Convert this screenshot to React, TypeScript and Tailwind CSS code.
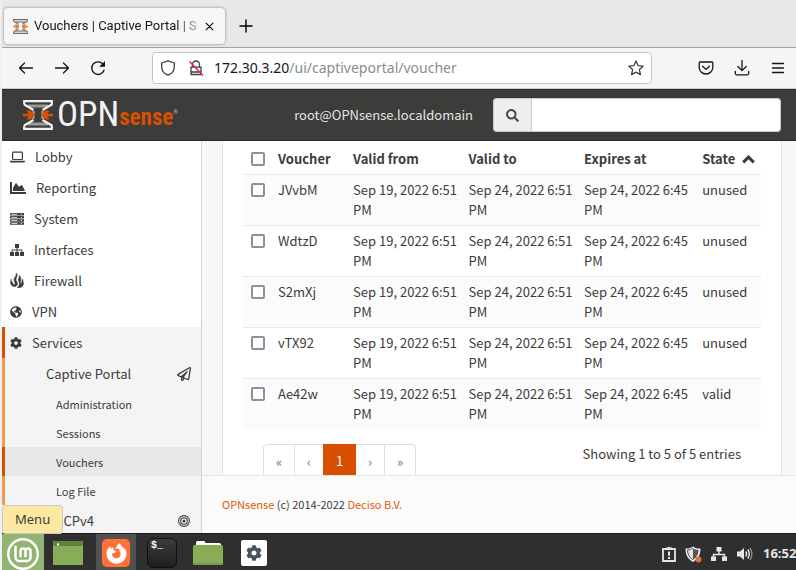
import type { ReactNode } from "react";
import {
  FaChartArea,
  FaCog,
  FaFirefoxBrowser,
  FaGlobeAmericas,
  FaRegPaperPlane,
  FaSearch,
} from "react-icons/fa";
import { SiLinuxmint } from "react-icons/si";

const UI = "font-['Noto_Sans',sans-serif]";
const PAGE = "font-['Noto_Sans_CJK_SC',sans-serif]";

/* ---------- icons ---------- */

function Line({ d, size = 16, width = 1.3, className = "" }: { d: string; size?: number; width?: number; className?: string }) {
  return (
    <svg width={size} height={size} viewBox="0 0 16 16" fill="none" stroke="currentColor" strokeWidth={width} strokeLinecap="round" strokeLinejoin="round" className={className} aria-hidden="true">
      <path d={d} />
    </svg>
  );
}

function LogoMark({ size, dark = false }: { size: number; dark?: boolean }) {
  const main = dark ? "#6d6d6d" : "#f2f2f2";
  const side = dark ? "#8c8c8c" : "#9a9a9a";
  const arrow = dark ? "#f07a1a" : "#d94f00";
  return (
    <svg width={size} height={size} viewBox="0 0 30 30" fill="none" aria-hidden="true">
      <path d="M5 6h20M5 24h20" stroke={side} strokeWidth="3" />
      <path d="M10.500 11v8M19.500 11v8" stroke={side} strokeWidth="2.400" />
      <path d="M1.200 4.500V1.200h27.600v3.300L19.500 10M1.200 4.500l9.300 5.500M1.200 25.500v3.300h27.600v-3.300L19.500 20M1.200 25.500l9.300-5.500" stroke={main} strokeWidth="2.200" />
      <path d="M0 13.700h5.500L3.800 10.400h3.600L12 15l-4.600 4.600H3.800l1.700-3.300H0zM30 13.700h-5.500l1.700-3.300h-3.600L18 15l4.600 4.600h3.600l-1.700-3.300H30z" fill={arrow} />
    </svg>
  );
}

const Laptop = () => (
  <svg width="15" height="12" viewBox="0 0 15 12" aria-hidden="true">
    <rect x="2.600" y="1.100" width="9.800" height="7.400" rx="0.800" fill="none" stroke="currentColor" strokeWidth="1.200" />
    <path d="M0 9.700h15v.8q0 1-1.200 1H1.200Q0 11.500 0 10.500z" fill="currentColor" />
  </svg>
);

const Server = () => (
  <svg width="14" height="12" viewBox="0 0 14 12" aria-hidden="true">
    {[0, 3.1, 6.2, 9.3].map((y) => (
      <g key={y}>
        <rect x="0" y={y} width="14" height="2.500" rx="0.400" fill="currentColor" />
        <path d={`M1.300 ${y + 1.25}h6M10.800 ${y + 1.25}h1.200`} stroke="#fff" strokeWidth="0.800" />
      </g>
    ))}
  </svg>
);

const Sitemap = () => (
  <svg width="14" height="12" viewBox="0 0 14 12" aria-hidden="true">
    <path d="M5 0h4v4H5zM0 8h4v4H0zM5 8h4v4H5zM10 8h4v4h-4z" fill="currentColor" />
    <path d="M7 3v6M2 9V6h10v3" fill="none" stroke="currentColor" />
  </svg>
);

const Flames = () => (
  <svg width="14" height="15" viewBox="0 0 14 15" fill="currentColor" stroke="currentColor" strokeWidth="0.500" aria-hidden="true">
    <path d="M6.300 0C7 3 3.800 4.300 4 7c.1 1.300.8 1.700 1 2.800.2 1.300-.4 2-1.100 1.900-.9-.2-1-1.300-1-2.200C1.800 9.500 1 8 1.200 6 .2 8.500.3 11.800 2.300 13c1.700 1 4.300.8 5-1.200.9-2.700-1.900-3.700-1.200-6C6.500 4.300 8.300 2 6.300 0z" />
    <path d="M9.300 2.500c.4 2.300-1.500 3-.8 5.200.5 1.600 1.300 2.800.5 4.700-.4 1-1.200 1.700-2 2.300 2.500.2 5-.2 6-2.200 1.200-2.600-.3-4-.2-6.300-.8.600-1.100 1.500-1 2.600.1 1-.2 1.600-.7 1.600-.8-.1-.9-1.200-.6-2.200.5-1.800 1-3.900-1.200-5.700z" />
  </svg>
);

const Target = () => (
  <svg width="12" height="12" viewBox="0 0 12 12" fill="none" stroke="currentColor" strokeWidth="1.100" aria-hidden="true">
    <circle cx="6" cy="6" r="5.400" />
    <circle cx="6" cy="6" r="3.300" />
    <circle cx="6" cy="6" r="1.500" fill="currentColor" stroke="none" />
  </svg>
);

/* ---------- browser chrome ---------- */

function TabStrip() {
  return (
    <div className="flex h-[47px] shrink-0 items-center bg-[#e8e8e8] pt-[5px] pl-[2px]">
      <div className="flex h-9 w-[221px] items-center rounded bg-[#f6f6f6] pr-2 pl-[9px] shadow-[0_0_3px_rgba(0,0,0,0.45)]">
        <LogoMark size={15} dark />
        <span className="ml-[6px] min-w-0 flex-1 overflow-hidden bg-linear-to-r from-[#15141a] from-85% to-[#15141a]/20 bg-clip-text font-[Roboto,sans-serif] text-[13px] whitespace-nowrap text-transparent">
          Vouchers | Captive Portal | S
        </span>
        <button aria-label="Close tab" className="flex w-4 justify-center">
          <Line d="M3 3l10 10M13 3L3 13" size={11} width={1.5} />
        </button>
      </div>
      <button aria-label="New tab" className="ml-[13px]">
        <Line d="M8 2v12M2 8h12" width={1.4} />
      </button>
    </div>
  );
}

function ToolButton({ label, children }: { label: string; children: ReactNode }) {
  return (
    <button aria-label={label} className="flex w-9 shrink-0 justify-center text-[#15141a]">
      {children}
    </button>
  );
}

function Toolbar() {
  return (
    <div className="flex h-[42px] shrink-0 items-center border-y border-t-[#a3a3a3] border-b-[#cccccc] bg-[#f5f5f5] pl-[6px]">
      <ToolButton label="Back"><Line d="M14.500 8H1.500M6.500 3L1.500 8l5 5" /></ToolButton>
      <ToolButton label="Forward"><Line d="M1.500 8h13M9.500 3l5 5-5 5" /></ToolButton>
      <ToolButton label="Reload">
        <svg width="16" height="16" viewBox="0 0 16 16" aria-hidden="true">
          <path d="M14 10.200A6.300 6.300 0 1 1 13.200 4.500" fill="none" stroke="currentColor" strokeWidth="1.400" strokeLinecap="round" />
          <path d="M15 1v5.800H9.200z" fill="currentColor" />
        </svg>
      </ToolButton>
      <div className="ml-9 flex h-8 min-w-0 flex-1 items-center rounded border border-[#c4c4c4] bg-white px-[7px] text-[#3f3f43]">
        <Line d="M8 .8l6.300 2.200v4c0 4-2.300 6.700-6.300 8.200C4 13.700 1.700 11 1.700 7V3z" />
        <svg width="16" height="16" viewBox="0 0 16 16" fill="none" stroke="currentColor" strokeWidth="1.300" className="ml-3" aria-hidden="true">
          <path d="M4.500 7V4.500a3.500 3.500 0 0 1 7 0V7M3 7.200h10v7.300H3zM3 12h10" />
          <path d="M1.500 1.500l13.500 14" stroke="#e22850" strokeWidth="1.500" />
        </svg>
        <span className="ml-[10px] flex-1 truncate text-sm text-[#8c8c8c]">
          <span className="text-[#15141a]">172.30.3.20</span>/ui/captiveportal/voucher
        </span>
        <button aria-label="Bookmark this page">
          <Line d="M8 1l2.100 4.600 5 .6-3.700 3.400 1 5L8 12.100l-4.400 2.500 1-5L.9 6.200l5-.6z" />
        </button>
      </div>
      <div className="w-9 shrink-0" />
      <ToolButton label="Save to Pocket"><Line d="M2.200 2h11.600q1 0 1 1v4.200a6.800 6.800 0 0 1-13.600 0V3q0-1 1-1zM4.600 6.200L8 9.400l3.400-3.200" /></ToolButton>
      <ToolButton label="Downloads"><Line d="M8 .5v10M3.800 6.500L8 10.600l4.200-4.100M1.300 11.500v1.800q0 1.500 1.500 1.500h10.400q1.500 0 1.500-1.500v-1.800" /></ToolButton>
      <ToolButton label="Open menu"><Line d="M2.500 3.500h11M2.500 8h11M2.500 12.500h11" width={1.4} /></ToolButton>
    </div>
  );
}

/* ---------- firewall web interface ---------- */

function Header() {
  return (
    <header className="flex h-[52px] shrink-0 items-center border-y border-[#2b282b] bg-[#3c3c3b] pr-[15px] pl-[21px]">
      <a href="#home" className="flex items-center font-['Roboto_Condensed','Liberation_Sans',sans-serif]">
        <LogoMark size={30} />
        <span className="ml-1 text-[35px] leading-[34px] text-[#f2f2f2]">OPN</span>
        <span className="mt-[6px] text-[23px] leading-[26px] font-bold text-[#d94f00]">sense</span>
        <span className="-mt-2 text-[6px] text-[#bbbbbb]">®</span>
      </a>
      <span className="ml-auto text-[13px] text-[#e4e4e4]">root@OPNsense.localdomain</span>
      <form className="ml-5 flex h-[34px] w-[288px] overflow-hidden rounded-[3px] border border-[#cccccc]">
        <label htmlFor="search" className="flex w-[38px] shrink-0 items-center justify-center border-r border-[#cccccc] bg-[#eeeeee] text-[#4a4a4a]">
          <FaSearch size={13} aria-label="Search" />
        </label>
        <input id="search" type="text" className="min-w-0 flex-1 bg-white px-3 text-sm outline-none" />
      </form>
    </header>
  );
}

const sections = [
  { name: "Lobby", icon: <Laptop /> },
  { name: "Reporting", icon: <FaChartArea size={16} /> },
  { name: "System", icon: <Server /> },
  { name: "Interfaces", icon: <Sitemap /> },
  { name: "Firewall", icon: <Flames /> },
  { name: "VPN", icon: <FaGlobeAmericas size={12} /> },
];

const pages = ["Administration", "Sessions", "Vouchers", "Log File"];

function Sidebar() {
  return (
    <nav className="w-[200px] shrink-0 overflow-hidden border-r border-[#d5d5d5] bg-white text-[13px] leading-5 text-[#3c3c3b]">
      {sections.map((s) => (
        <a key={s.name} href={`#${s.name}`} className="flex h-[31px] items-center gap-[10px] pl-2">
          {s.icon}
          {s.name}
        </a>
      ))}
      <div className="bg-[#f4f4f4]">
        <a href="#Services" className="flex h-[31px] items-center gap-[10px] border-l-3 border-[#d94f00] pl-[5px]">
          <FaCog size={12} />
          Services
        </a>
        <a href="#CaptivePortal" className="flex h-[31px] items-center justify-between border-l-3 border-[#f09a55] pr-[10px] pl-[41px]">
          Captive Portal
          <FaRegPaperPlane size={14} />
        </a>
        {pages.map((p) => (
          <a
            key={p}
            href={`#${p}`}
            className={`flex h-[29px] items-center border-l-3 pl-[51px] text-[11px] ${p === "Vouchers" ? "border-[#d94f00] bg-[#e7e7e7]" : "border-[#f09a55]"}`}
          >
            {p}
          </a>
        ))}
        <a href="#DHCPv4" className="flex h-[31px] items-center justify-between border-l-3 border-transparent pr-[11px] pl-10">
          DHCPv4
          <Target />
        </a>
      </div>
    </nav>
  );
}

const vouchers = [
  { code: "JVvbM", state: "unused" },
  { code: "WdtzD", state: "unused" },
  { code: "S2mXj", state: "unused" },
  { code: "vTX92", state: "unused" },
  { code: "Ae42w", state: "valid" },
];

const CHECK = "block size-[14px] appearance-none rounded-[2px] border-2 border-[#8f8f9d] bg-white";

function VoucherTable() {
  return (
    <table className="w-full table-fixed text-left">
      <colgroup>
        <col className="w-[27px]" />
        <col className="w-[14.5%]" />
        <col className="w-[22.3%]" />
        <col className="w-[22.3%]" />
        <col className="w-[22.8%]" />
        <col />
      </colgroup>
      <thead>
        <tr className="h-[33px] [&>th]:pt-1 [&>th]:pl-2 [&>th]:font-bold">
          <th><input type="checkbox" aria-label="Select all" className={CHECK} /></th>
          <th>Voucher</th>
          <th>Valid from</th>
          <th>Valid to</th>
          <th>Expires at</th>
          <th className="whitespace-nowrap">
            State
            <svg width="13" height="9" viewBox="0 0 13 9" className="ml-[7px] inline-block align-baseline" aria-hidden="true">
              <path d="M1.200 7.300L6.500 2.200l5.300 5.100" fill="none" stroke="currentColor" strokeWidth="3.200" />
            </svg>
          </th>
        </tr>
      </thead>
      <tbody>
        {vouchers.map((v) => (
          <tr key={v.code} className="border-t border-[#e9e9e9] align-top odd:bg-[#fbfbfb] [&>td]:py-[5px] [&>td]:pl-2">
            <td><input type="checkbox" aria-label={`Select ${v.code}`} className={`${CHECK} mt-[3px]`} /></td>
            <td>{v.code}</td>
            <td>Sep 19, 2022 6:51 PM</td>
            <td>Sep 24, 2022 6:51 PM</td>
            <td>Sep 24, 2022 6:45 PM</td>
            <td>{v.state}</td>
          </tr>
        ))}
      </tbody>
    </table>
  );
}

function Pagination() {
  return (
    <div className="flex h-9 rounded border border-[#dddddd] text-[13px] text-[#777777] [&>button]:h-[34px]">
      <button aria-label="First page" className="w-[30px]">«</button>
      <button aria-label="Previous page" className="w-[29px] border-l border-[#dddddd]">‹</button>
      <button aria-current="page" className="-mt-px w-[33px] bg-[#d94f00] text-white">1</button>
      <button aria-label="Next page" className="w-7">›</button>
      <button aria-label="Last page" className="w-[31px] border-l border-[#dddddd]">»</button>
    </div>
  );
}

/* ---------- desktop panel ---------- */

const Window = () => (
  <svg width="30" height="24" viewBox="0 0 30 24" aria-hidden="true">
    <path d="M0 0h30v24H0z" fill="#87ad56" />
    <path d="M0 0h30v5H0z" fill="#628242" />
    <path d="M4 2.500h2v2H4z" fill="#fff" />
  </svg>
);

const Terminal = () => (
  <span className="flex size-[30px] rounded-md border border-[#111111] bg-linear-to-b from-[#3c3c3c] to-[#1f1f1f] pl-[3px] font-['Liberation_Mono',monospace] text-[10px] leading-[13px] font-bold text-white">
    $_
  </span>
);

const Folder = () => (
  <svg width="30" height="26" viewBox="0 0 30 26" aria-hidden="true">
    <path d="M3 8V2.500Q3 1 4.500 1H11q1 0 1.500 2h14q1.500 0 1.500 1.500V8z" fill="#fff" />
    <rect y="5" width="30" height="20" rx="1.500" fill="#87ad56" />
    <path d="M0 24h30" stroke="#6b8c45" />
  </svg>
);

function Task({ label, active = false, children }: { label: string; active?: boolean; children: ReactNode }) {
  return (
    <button aria-label={label} className={`flex w-10 items-center justify-center pt-[2px] ${active ? "bg-[#515151]" : ""}`}>
      {children}
    </button>
  );
}

function Taskbar() {
  return (
    <footer className="relative flex h-[37px] shrink-0 justify-between overflow-visible border-t border-[#1d1d1f] bg-[#2f2f2f]">
      <div role="tooltip" className="absolute bottom-9 left-0 rounded-[3px] border border-[#c8c8c8] bg-[#fce8a1] px-3 py-1 text-[13px] leading-[19px] text-[#3d3d3d]">
        Menu
      </div>
      <div className="-ml-[2px] flex gap-[6px] pl-[2px]">
        <button aria-label="Menu" className="mr-[-2px] flex w-[42px] items-center justify-center bg-[#92b372] pt-1 text-white">
          <SiLinuxmint size={32} />
        </button>
        <Task label="Show desktop"><Window /></Task>
        <div className="ml-[2px] flex">
          <Task label="Firefox" active>
            <span className="flex size-7 items-center justify-center rounded-[5px] bg-[#ff7139] text-white">
              <FaFirefoxBrowser size={21} />
            </span>
          </Task>
        </div>
        <Task label="Terminal"><Terminal /></Task>
        <Task label="Files"><Folder /></Task>
        <Task label="Settings">
          <span className="flex size-[26px] items-center justify-center rounded-[2px] bg-white text-[#47525e]">
            <FaCog size={16} />
          </span>
        </Task>
      </div>
      <div className="flex items-center pt-1 text-[#e6e6e6]">
        <svg width="14" height="16" viewBox="0 0 14 16" aria-hidden="true">
          <path d="M1 3h12v12H1z" fill="none" stroke="currentColor" strokeWidth="1.800" />
          <path d="M4 3.500V1.500h1.800a1.300 1.300 0 0 1 2.400 0H10v2zM6 5.500h2v4.200H6zM6 11h2v2H6z" fill="currentColor" />
        </svg>
        <svg width="17" height="17" viewBox="0 0 17 17" className="ml-[9px]" aria-hidden="true">
          <path d="M8 .5c2.500 1.700 4.500 2 7.500 2 0 6.500-2 10.500-7.500 13.500C2.500 13 .5 9 .5 2.500c3 0 5-.3 7.500-2z" fill="currentColor" />
          <path d="M8 2.500c1.800 1 3.200 1.400 5.500 1.500-.3 4.500-1.800 7.500-5.500 9.700z" fill="#555" />
          <path d="M8 2.500C6.200 3.500 4.800 3.900 2.500 4c.3 4.500 1.800 7.500 5.500 9.700" fill="none" stroke="#555" />
          <circle cx="13.500" cy="13.500" r="3" fill="#e2703a" />
        </svg>
        <svg width="16" height="14" viewBox="0 0 16 14" className="ml-[9px]" fill="currentColor" aria-hidden="true">
          <path d="M5.500 0h5v4.500h-5zM0 9.500h5V14H0zM11 9.500h5V14h-5zM7.300 4h1.400v2.800h5.500V10h-1.400V8.200H3.200V10H1.800V6.800h5.500z" />
        </svg>
        <svg width="16" height="14" viewBox="0 0 16 14" className="ml-[10px]" fill="none" stroke="currentColor" strokeWidth="1.400" aria-hidden="true">
          <path d="M0 4.500h3L7 1v12L3 9.500H0z" fill="currentColor" stroke="none" />
          <path d="M8.800 4.500q1.700 2.500 0 5M10.800 2.500q3 4.500 0 9" />
          <path d="M13 .8q3.800 6.200 0 12.400" stroke="#8a8a8a" />
        </svg>
        <time className="ml-[10px] w-[33px] overflow-hidden text-[13px] font-bold whitespace-nowrap">16:52</time>
      </div>
    </footer>
  );
}

export default function App() {
  return (
    <div className={`flex h-screen flex-col overflow-hidden bg-[#f0f0f0] pl-[2px] ${UI}`}>
      <TabStrip />
      <Toolbar />
      <div className={`flex min-h-0 flex-1 flex-col ${PAGE}`}>
        <Header />
        <div className="flex min-h-0 flex-1">
          <Sidebar />
          <div className="flex min-w-0 flex-1 flex-col bg-[#f7f7f7]">
            <main className="min-h-0 flex-1 overflow-hidden pr-[14px] pl-5">
              <section className="border-x border-[#e2e2e2] bg-white px-5 text-[13px] leading-5 text-[#3c3c3b]">
                <VoucherTable />
                <div className="flex items-start justify-between px-5 pt-[15px] pb-5">
                  <Pagination />
                  <span>Showing 1 to 5 of 5 entries</span>
                </div>
              </section>
            </main>
            <footer className="flex h-[58px] shrink-0 items-center border-t border-[#e5e5e5] bg-[#fbfbfb] pl-5 text-[11px] text-[#3c3c3b]">
              <p>
                <a href="#opnsense" className="text-[#e0590e]">OPNsense</a> (c) 2014-2022{" "}
                <a href="#deciso" className="text-[#e0590e]">Deciso B.V.</a>
              </p>
            </footer>
          </div>
        </div>
      </div>
      <Taskbar />
    </div>
  );
}
